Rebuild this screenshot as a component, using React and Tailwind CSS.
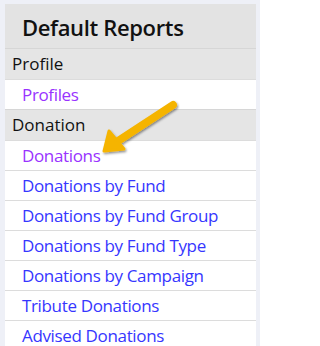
import React from "react";

const sections = [
  { title: "Profile", links: [{ label: "Profiles", visited: true }] },
  {
    title: "Donation",
    links: [
      { label: "Donations", visited: true },
      { label: "Donations by Fund" },
      { label: "Donations by Fund Group" },
      { label: "Donations by Fund Type" },
      { label: "Donations by Campaign" },
      { label: "Tribute Donations" },
      { label: "Advised Donations" },
    ],
  },
];

const Arrow = () => (
  <svg
    className="absolute left-0 top-0 pointer-events-none"
    width="260"
    height="346"
    viewBox="0 0 260 346"
  >
    <defs>
      <filter id="sh" x="-20%" y="-20%" width="140%" height="140%">
        <feDropShadow dx="1" dy="1.5" stdDeviation="1.2" floodColor="#000" floodOpacity="0.45" />
      </filter>
    </defs>
    <g filter="url(#sh)">
      <line x1="173" y1="105" x2="118" y2="141" stroke="#f5b400" strokeWidth="8" strokeLinecap="round" />
      <polygon points="104,151 109,131 124,149" fill="#f5b400" stroke="#f5b400" strokeWidth="3" strokeLinejoin="round" />
    </g>
  </svg>
);

export default function App() {
  return (
    <div className="relative w-[260px] h-[346px] overflow-hidden bg-[#eef0f7] pt-1 pl-[5px] pr-1 font-['Open_Sans',sans-serif]">
      <div className="bg-white">
        <div className="h-11 bg-[#e3e3e3] flex items-center pl-[17px] pt-[3px] text-[22px] font-semibold tracking-[-0.35px] text-[#111]">
          Default Reports
        </div>
        {sections.map((s) => (
          <div key={s.title}>
            <div className="h-[31px] border-t border-[#d6d6d6] bg-[#e5e5e5] flex items-center pl-[7px] text-[17px] text-[#111]">
              {s.title}
            </div>
            {s.links.map((l) => (
              <div
                key={l.label}
                className="h-[30px] border-t border-[#dcdcdc] bg-white flex items-center pl-[17px] text-[17px] tracking-[-0.35px]"
              >
                <a className={l.visited ? "text-[#9933ff]" : "text-[#3636ff]"}>{l.label}</a>
              </div>
            ))}
          </div>
        ))}
      </div>
      <Arrow />
    </div>
  );
}
